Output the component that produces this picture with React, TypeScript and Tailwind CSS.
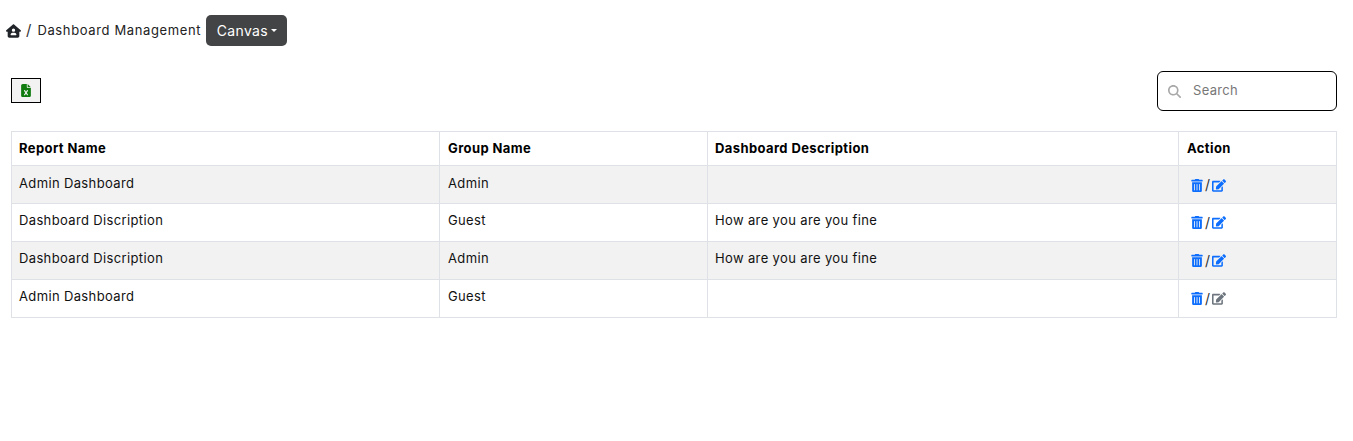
import { FaEdit, FaTrashAlt } from "react-icons/fa";
import { FaFileExcel, FaHouseUser, FaMagnifyingGlass } from "react-icons/fa6";

const rows = [
  { report: "Admin Dashboard", group: "Admin", description: "", striped: true, editable: true },
  { report: "Dashboard Discription", group: "Guest", description: "How are you are you fine", striped: false, editable: true },
  { report: "Dashboard Discription", group: "Admin", description: "How are you are you fine", striped: true, editable: true },
  { report: "Admin Dashboard", group: "Guest", description: "", striped: false, editable: false },
];

const App = () => {
  return (
    <div className="min-h-[441px] bg-white font-['Inter',sans-serif] text-[13px] text-[#111]">
      <div className="flex items-center pl-[6px] pt-[15px]">
        <FaHouseUser className="h-[14px] w-[15px] text-[#212529]" />
        <span className="ml-[5px] text-[15px] text-[#333]">/</span>
        <span className="ml-[6px] w-[164px] whitespace-nowrap tracking-[0.63px] text-[#222]">Dashboard Management</span>
        <button className="ml-[5px] flex h-[31px] w-[81px] items-center justify-center rounded-[5px] bg-[#434445] text-[14px] tracking-[0.35px] text-white">
          Canvas
          <span className="ml-[3px] mt-[-1px] h-0 w-0 border-x-[3.5px] border-t-[3.5px] border-x-transparent border-t-white" />
        </button>
      </div>

      <div className="mt-[25px] flex items-center justify-between pl-[11px] pr-[16px]">
        <button className="mt-[-2px] flex h-[25px] w-[30px] items-center justify-center border border-black bg-[#f2f2f2]">
          <FaFileExcel className="h-[13px] w-[10px] text-[#107c10]" />
        </button>
        <div className="flex h-[40px] w-[180px] items-center rounded-[6px] border border-black pl-[10px]">
          <FaMagnifyingGlass className="h-[13px] w-[13px] text-[#a8a8a8]" />
          <span className="ml-[12px] tracking-[0.3px] text-[#777]">Search</span>
        </div>
      </div>

      <div className="ml-[11px] mt-[20px] w-[1326px]">
        <div className="grid h-[35px] grid-cols-[427px_268px_471px_158px] border border-[#dee2e6] font-bold tracking-[0.4px] text-black">
          <div className="flex items-center px-[7px]">Report Name</div>
          <div className="flex items-center border-l border-[#dee2e6] px-[8px]">Group Name</div>
          <div className="flex items-center border-l border-[#dee2e6] px-[7px]">Dashboard Description</div>
          <div className="flex items-center border-l border-[#dee2e6] px-[8px]">Action</div>
        </div>
        {rows.map((row, i) => (
          <div
            key={i}
            className={`grid h-[38px] grid-cols-[427px_268px_471px_158px] border-x border-b border-[#dee2e6] tracking-[0.36px] ${row.striped ? "bg-[#f2f2f2]" : "bg-white"}`}
          >
            <div className={`flex items-center px-[7px] ${i === 0 ? "pb-[2px]" : "pb-[4px]"}`}>{row.report}</div>
            <div className={`flex items-center border-l border-[#dee2e6] px-[8px] ${i === 0 ? "pb-[2px]" : "pb-[4px]"}`}>{row.group}</div>
            <div className={`flex items-center border-l border-[#dee2e6] px-[7px] ${i === 0 ? "pb-[2px]" : "pb-[4px]"}`}>{row.description}</div>
            <div className={`flex items-center border-l border-[#dee2e6] pl-[12px] ${i === 0 ? "pt-[1px]" : ""}`}>
              <FaTrashAlt className="h-[13px] w-[12px] text-[#0d6efd]" />
              <span className="mx-[2px] mt-[-1px] text-[14px] text-[#333]">/</span>
              <FaEdit className={`h-[13px] w-[14px] ${row.editable ? "text-[#0d6efd]" : "text-[#6c757d]"}`} />
            </div>
          </div>
        ))}
      </div>
    </div>
  );
};

export default App;
